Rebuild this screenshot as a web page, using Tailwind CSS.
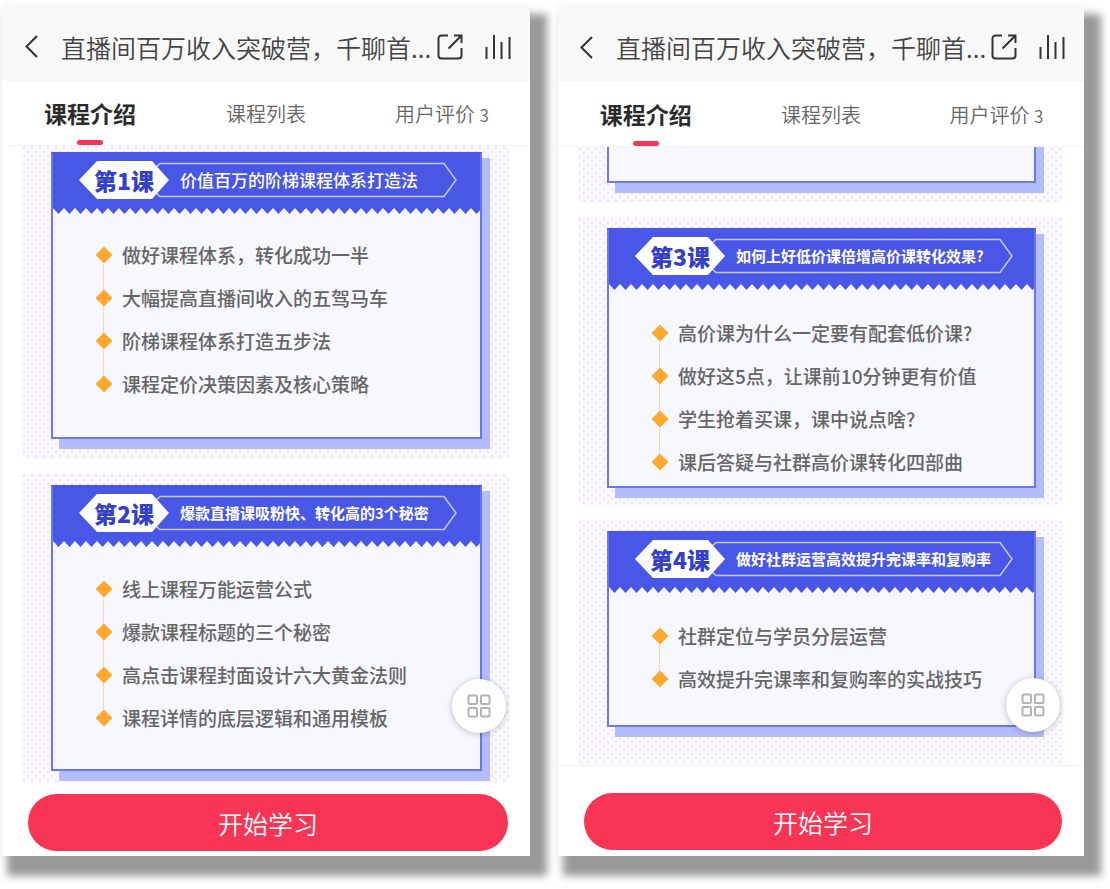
<!DOCTYPE html>
<html lang="zh-CN">
<head>
  <meta charset="UTF-8" />
  <meta name="viewport" content="width=device-width, initial-scale=1.0" />
  <title>直播间百万收入突破营</title>
  <script src="https://cdn.jsdelivr.net/npm/@tailwindcss/browser@4"></script>
</head>
<body class="bg-white font-['Noto_Sans_CJK_SC',sans-serif] min-h-screen">

  <!-- shared shapes -->
  <svg class="hidden" aria-hidden="true">
    <symbol id="back" viewBox="0 0 13 23"><path d="M12 1 1.5 11.5 12 22" fill="none" stroke="#333" stroke-width="2" /></symbol>
    <symbol id="share" viewBox="0 0 26 26">
      <path d="M11 1.5H4.5a3 3 0 0 0-3 3v17a3 3 0 0 0 3 3h17a3 3 0 0 0 3-3V14M17 1.5h7.5V9M24 2 11.5 14.5" fill="none" stroke="#333" stroke-width="2" />
    </symbol>
    <symbol id="bars" viewBox="0 0 26 26"><path d="M1.5 13v12M9 1v24M16.5 8v17M24.5 3v22" fill="none" stroke="#333" stroke-width="2" /></symbol>
    <symbol id="banner" viewBox="0 0 378 38">
      <path d="M76 7 81 2.5H365L377 19 365 35.5H81L76 31" fill="none" stroke="#c3caff" stroke-width="1.5" />
      <path d="M0 19 18 0H73L90 19 73 38H18Z" fill="#fff" />
    </symbol>
    <symbol id="diamond" viewBox="0 0 18 18"><path d="M9 0.5 17.5 9 9 17.5 0.5 9Z" fill="#ffa82e" /></symbol>
    <symbol id="grid" viewBox="0 0 24 24">
      <g fill="none" stroke="#b3b3b3" stroke-width="2">
        <rect x="1.5" y="1.5" width="8.5" height="8.5" rx="1" /><rect x="14" y="1.5" width="8.5" height="8.5" rx="1" />
        <rect x="1.5" y="14" width="8.5" height="8.5" rx="1" /><rect x="14" y="14" width="8.5" height="8.5" rx="1" />
      </g>
    </symbol>
  </svg>
  <svg class="absolute w-0 h-0" aria-hidden="true">
    <defs>
      <pattern id="teeth" width="11" height="6" patternUnits="userSpaceOnUse"><path d="M0 0H11L5.5 6Z" fill="#4957e6" /></pattern>
      <pattern id="dots" width="8" height="8" patternUnits="userSpaceOnUse">
        <rect width="8" height="8" fill="#fbf9ff" />
        <circle cx="2" cy="2" r="1.2" fill="#ece4f6" /><circle cx="6" cy="6" r="1.2" fill="#ece4f6" />
      </pattern>
    </defs>
  </svg>

  <div class="grid grid-cols-[528fr_526fr] items-start gap-7 pt-[6px] pl-[2px] pr-[26px] pb-8">

    <!-- left phone -->
    <section class="relative bg-white shadow-[11px_14px_8px_6px_#999,0_0_6px_rgba(0,0,0,0.06)]">
      <header class="flex h-[75px] items-center bg-[#f8f8f8] pt-[6px] pl-[23px] pr-[19px]">
        <button aria-label="返回"><svg class="h-[23px] w-[13px]"><use href="#back" /></svg></button>
        <h1 class="ml-[23px] min-w-0 flex-1 whitespace-nowrap text-[25px] leading-9 font-[350] text-[#444]">直播间百万收入突破营，千聊首...</h1>
        <button aria-label="分享"><svg class="size-[26px]"><use href="#share" /></svg></button>
        <button class="ml-[22px]" aria-label="数据"><svg class="size-[26px]"><use href="#bars" /></svg></button>
      </header>
      <nav class="grid h-[65px] grid-cols-3 border-b border-[#f3f3f3] text-center">
        <a href="#" class="flex flex-col items-center justify-between pt-[14px] text-[23px] leading-9 font-bold text-[#2b2b2b]">课程介绍<span class="h-[5px] w-[26px] rounded-full bg-[#f93556]"></span></a>
        <a href="#" class="pt-[15px] text-[20px] leading-9 font-[350] text-[#666]">课程列表</a>
        <a href="#" class="pt-[15px] text-[20px] leading-9 font-[350] text-[#666]">用户评价 <span class="text-[17px]">3</span></a>
      </nav>
      <main class="flex flex-col gap-[15px] pl-5 pr-[21px]">
        <div class="relative pt-[6px] pr-[27px] pb-5 pl-[29px]">
          <svg class="absolute inset-0 size-full"><rect width="100%" height="100%" fill="url(#dots)" /></svg>
          <article class="relative border-2 border-[#6b76f0] border-t-[#4957e6] bg-[#f7f7ff] pb-[32px] shadow-[8px_6px_0_#b3bdfd,8px_10px_0_#b3bdfd]">
            <div class="h-[54px] bg-[#4957e6] pt-[7px] pl-[26px]">
              <div class="relative flex h-[38px] w-[378px] items-center">
                <svg class="absolute inset-0 size-full"><use href="#banner" /></svg>
                <strong class="relative w-[90px] text-center text-[23px] leading-9 font-black text-[#3440c8]">第1课</strong>
                <h2 class="relative ml-[11px] whitespace-nowrap text-[17px] font-medium text-white">价值百万的阶梯课程体系打造法</h2>
              </div>
            </div>
            <svg class="block h-[6px] w-full"><rect width="100%" height="6" fill="url(#teeth)" /></svg>
            <ul class="relative mt-[19px] ml-[42px] text-[19px] leading-[43px] font-medium text-[#666]">
              <li class="absolute top-[21px] left-[8px] h-[129px] border-l border-dotted border-[#ffb854]" aria-hidden="true"></li>
              <li class="relative flex h-[43px] items-center gap-[9px]"><svg class="size-[18px]"><use href="#diamond" /></svg>做好课程体系，转化成功一半</li>
              <li class="relative flex h-[43px] items-center gap-[9px]"><svg class="size-[18px]"><use href="#diamond" /></svg>大幅提高直播间收入的五驾马车</li>
              <li class="relative flex h-[43px] items-center gap-[9px]"><svg class="size-[18px]"><use href="#diamond" /></svg>阶梯课程体系打造五步法</li>
              <li class="relative flex h-[43px] items-center gap-[9px]"><svg class="size-[18px]"><use href="#diamond" /></svg>课程定价决策因素及核心策略</li>
            </ul>
          </article>
        </div>
        <div class="relative pt-[11px] pr-[27px] pb-3 pl-[29px]">
          <svg class="absolute inset-0 size-full"><rect width="100%" height="100%" fill="url(#dots)" /></svg>
          <article class="relative border-2 border-[#6b76f0] border-t-[#4957e6] bg-[#f7f7ff] pb-[30px] shadow-[8px_6px_0_#b3bdfd,8px_10px_0_#b3bdfd]">
            <div class="h-[54px] bg-[#4957e6] pt-[7px] pl-[26px]">
              <div class="relative flex h-[38px] w-[378px] items-center">
                <svg class="absolute inset-0 size-full"><use href="#banner" /></svg>
                <strong class="relative w-[90px] text-center text-[23px] leading-9 font-black text-[#3440c8]">第2课</strong>
                <h2 class="relative ml-[11px] whitespace-nowrap text-[15px] font-bold text-white">爆款直播课吸粉快、转化高的3个秘密</h2>
              </div>
            </div>
            <svg class="block h-[6px] w-full"><rect width="100%" height="6" fill="url(#teeth)" /></svg>
            <ul class="relative mt-[20px] ml-[42px] text-[19px] leading-[43px] font-medium text-[#666]">
              <li class="absolute top-[21px] left-[8px] h-[129px] border-l border-dotted border-[#ffb854]" aria-hidden="true"></li>
              <li class="relative flex h-[43px] items-center gap-[9px]"><svg class="size-[18px]"><use href="#diamond" /></svg>线上课程万能运营公式</li>
              <li class="relative flex h-[43px] items-center gap-[9px]"><svg class="size-[18px]"><use href="#diamond" /></svg>爆款课程标题的三个秘密</li>
              <li class="relative flex h-[43px] items-center gap-[9px]"><svg class="size-[18px]"><use href="#diamond" /></svg>高点击课程封面设计六大黄金法则</li>
              <li class="relative flex h-[43px] items-center gap-[9px]"><svg class="size-[18px]"><use href="#diamond" /></svg>课程详情的底层逻辑和通用模板</li>
            </ul>
          </article>
        </div>
      </main>
      <footer class="relative bg-white px-[26px] pt-[11px] pr-[22px] pb-[5px]">
        <button class="h-[57px] w-full rounded-full bg-[#f93556] text-[25px] leading-9 font-[350] text-white">开始学习</button>
      </footer>
      <button class="absolute right-6 bottom-[123px] flex size-[54px] items-center justify-center rounded-full bg-white shadow-[0_1px_6px_rgba(0,0,0,0.25)]" aria-label="更多">
        <svg class="size-6"><use href="#grid" /></svg>
      </button>
    </section>

    <!-- right phone -->
    <section class="relative bg-white shadow-[11px_14px_8px_6px_#999,0_0_6px_rgba(0,0,0,0.06)]">
      <header class="flex h-[76px] items-center bg-[#f8f8f8] pt-[6px] pl-[22px] pr-[19px]">
        <button aria-label="返回"><svg class="h-[23px] w-[13px]"><use href="#back" /></svg></button>
        <h1 class="ml-[23px] min-w-0 flex-1 whitespace-nowrap text-[25px] leading-9 font-[350] text-[#444]">直播间百万收入突破营，千聊首...</h1>
        <button aria-label="分享"><svg class="size-[26px]"><use href="#share" /></svg></button>
        <button class="ml-[22px]" aria-label="数据"><svg class="size-[26px]"><use href="#bars" /></svg></button>
      </header>
      <nav class="grid h-[65px] grid-cols-3 border-b border-[#f3f3f3] text-center">
        <a href="#" class="flex flex-col items-center justify-between pt-[14px] text-[23px] leading-9 font-bold text-[#2b2b2b]">课程介绍<span class="h-[5px] w-[26px] rounded-full bg-[#f93556]"></span></a>
        <a href="#" class="pt-[15px] text-[20px] leading-9 font-[350] text-[#666]">课程列表</a>
        <a href="#" class="pt-[15px] text-[20px] leading-9 font-[350] text-[#666]">用户评价 <span class="text-[17px]">3</span></a>
      </nav>
      <main class="flex flex-col gap-[15px] pl-5 pr-[21px]">
        <div class="relative pr-[27px] pb-[19px] pl-[29px]">
          <svg class="absolute inset-0 size-full"><rect width="100%" height="100%" fill="url(#dots)" /></svg>
          <div class="relative h-9 border-2 border-t-0 border-[#6b76f0] bg-[#f7f7ff] shadow-[8px_0_0_#b3bdfd,8px_10px_0_#b3bdfd]"></div>
        </div>
        <div class="relative pt-[11px] pr-[27px] pb-[17px] pl-[29px]">
          <svg class="absolute inset-0 size-full"><rect width="100%" height="100%" fill="url(#dots)" /></svg>
          <article class="relative border-2 border-[#6b76f0] border-t-[#4957e6] bg-[#f7f7ff] pb-[3px] shadow-[8px_6px_0_#b3bdfd,8px_10px_0_#b3bdfd]">
            <div class="h-[54px] bg-[#4957e6] pt-[7px] pl-[26px]">
              <div class="relative flex h-[38px] w-[378px] items-center">
                <svg class="absolute inset-0 size-full"><use href="#banner" /></svg>
                <strong class="relative w-[90px] text-center text-[23px] leading-9 font-black text-[#3440c8]">第3课</strong>
                <h2 class="relative ml-[11px] whitespace-nowrap text-[15px] font-bold text-white">如何上好低价课倍增高价课转化效果?</h2>
              </div>
            </div>
            <svg class="block h-[6px] w-full"><rect width="100%" height="6" fill="url(#teeth)" /></svg>
            <ul class="relative mt-[21px] ml-[42px] text-[19px] leading-[43px] font-medium text-[#666]">
              <li class="absolute top-[21px] left-[8px] h-[129px] border-l border-dotted border-[#ffb854]" aria-hidden="true"></li>
              <li class="relative flex h-[43px] items-center gap-[9px]"><svg class="size-[18px]"><use href="#diamond" /></svg>高价课为什么一定要有配套低价课?</li>
              <li class="relative flex h-[43px] items-center gap-[9px]"><svg class="size-[18px]"><use href="#diamond" /></svg>做好这5点，让课前10分钟更有价值</li>
              <li class="relative flex h-[43px] items-center gap-[9px]"><svg class="size-[18px]"><use href="#diamond" /></svg>学生抢着买课，课中说点啥?</li>
              <li class="relative flex h-[43px] items-center gap-[9px]"><svg class="size-[18px]"><use href="#diamond" /></svg>课后答疑与社群高价课转化四部曲</li>
            </ul>
          </article>
        </div>
        <div class="relative pt-[11px] pr-[27px] pb-[38px] pl-[29px]">
          <svg class="absolute inset-0 size-full"><rect width="100%" height="100%" fill="url(#dots)" /></svg>
          <article class="relative border-2 border-[#6b76f0] border-t-[#4957e6] bg-[#f7f7ff] pb-[25px] shadow-[8px_6px_0_#b3bdfd,8px_10px_0_#b3bdfd]">
            <div class="h-[54px] bg-[#4957e6] pt-[7px] pl-[26px]">
              <div class="relative flex h-[38px] w-[378px] items-center">
                <svg class="absolute inset-0 size-full"><use href="#banner" /></svg>
                <strong class="relative w-[90px] text-center text-[23px] leading-9 font-black text-[#3440c8]">第4课</strong>
                <h2 class="relative ml-[11px] whitespace-nowrap text-[15px] font-bold text-white">做好社群运营高效提升完课率和复购率</h2>
              </div>
            </div>
            <svg class="block h-[6px] w-full"><rect width="100%" height="6" fill="url(#teeth)" /></svg>
            <ul class="relative mt-[21px] ml-[42px] text-[19px] leading-[43px] font-medium text-[#666]">
              <li class="absolute top-[21px] left-[8px] h-[43px] border-l border-dotted border-[#ffb854]" aria-hidden="true"></li>
              <li class="relative flex h-[43px] items-center gap-[9px]"><svg class="size-[18px]"><use href="#diamond" /></svg>社群定位与学员分层运营</li>
              <li class="relative flex h-[43px] items-center gap-[9px]"><svg class="size-[18px]"><use href="#diamond" /></svg>高效提升完课率和复购率的实战技巧</li>
            </ul>
          </article>
        </div>
      </main>
      <footer class="relative border-t border-[#eee] bg-white px-[26px] pt-[27px] pr-[22px] pb-[6px]">
        <button class="h-[57px] w-full rounded-full bg-[#f93556] text-[25px] leading-9 font-[350] text-white">开始学习</button>
      </footer>
      <button class="absolute right-6 bottom-[124px] flex size-[54px] items-center justify-center rounded-full bg-white shadow-[0_1px_6px_rgba(0,0,0,0.25)]" aria-label="更多">
        <svg class="size-6"><use href="#grid" /></svg>
      </button>
    </section>

  </div>

</body>
</html>
